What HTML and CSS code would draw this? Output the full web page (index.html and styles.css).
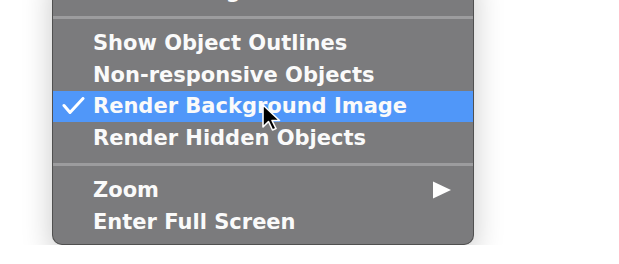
FILE: index.html
```html
<!DOCTYPE html>
<html lang="en">
<head>
    <meta charset="UTF-8">
    <title>View Menu</title>
    <link rel="stylesheet" href="styles.css">
</head>
<body>
    <div class="menu">
        <div class="menu-item">Show Debug Information</div>
        <div class="separator"></div>
        <div class="menu-item">Show Object Outlines</div>
        <div class="menu-item">Non-responsive Objects</div>
        <div class="menu-item selected">
            <svg class="check" width="24" height="18" viewBox="0 0 24 18">
                <path d="M2 8.5 L8 15.5 L21 1.5" fill="none" stroke="#fff" stroke-width="3" stroke-linecap="round" stroke-linejoin="round"/>
            </svg>
            Render Background Image
        </div>
        <div class="menu-item">Render Hidden Objects</div>
        <div class="separator"></div>
        <div class="menu-item">
            Zoom
            <svg class="submenu-arrow" width="18" height="18" viewBox="0 0 18 18">
                <path d="M0 0.5 L18 9 L0 17.5 Z" fill="#fff"/>
            </svg>
        </div>
        <div class="menu-item">Enter Full Screen</div>

        <!-- mouse pointer over the highlighted row -->
        <svg class="cursor" width="24" height="32" viewBox="0 0 24 32">
            <path d="M2 2 L2 24 L7.5 18.5 L11.5 27 L15 25.5 L11 17.5 L18.5 17.5 Z" fill="#000" stroke="#fff" stroke-width="1.6" stroke-linejoin="round"/>
        </svg>
    </div>
</body>
</html>
```

FILE: styles.css
```css
body {
    margin: 0;
    padding: 0;
    background-color: #ffffff;
    font-family: "DejaVu Sans", "Liberation Sans", sans-serif;
    overflow: hidden;
}

.menu {
    position: relative;
    width: 420px;
    margin: -29px 0 0 52px;
    padding: 4px 0 6px;
    background-color: #7b7b7d;
    border: 1px solid #505050;
    border-top: none;
    border-radius: 0 0 10px 10px;
    box-shadow: 0 10px 30px rgba(0, 0, 0, 0.22);
}

.menu-item {
    position: relative;
    display: flex;
    align-items: center;
    height: 31.5px;
    padding-left: 40px;
    padding-right: 22px;
    color: #fafafa;
    font-size: 21px;
    font-weight: bold;
    white-space: nowrap;
}

.menu-item.selected {
    background-color: #5097f9;
}

.check {
    position: absolute;
    left: 9px;
    top: 6px;
}

.submenu-arrow {
    margin-left: auto;
}

.separator {
    height: 3px;
    margin: 9.5px 0 8.5px;
    background-color: #9c9c9e;
}

.cursor {
    position: absolute;
    left: 208px;
    top: 132px;
}
```
